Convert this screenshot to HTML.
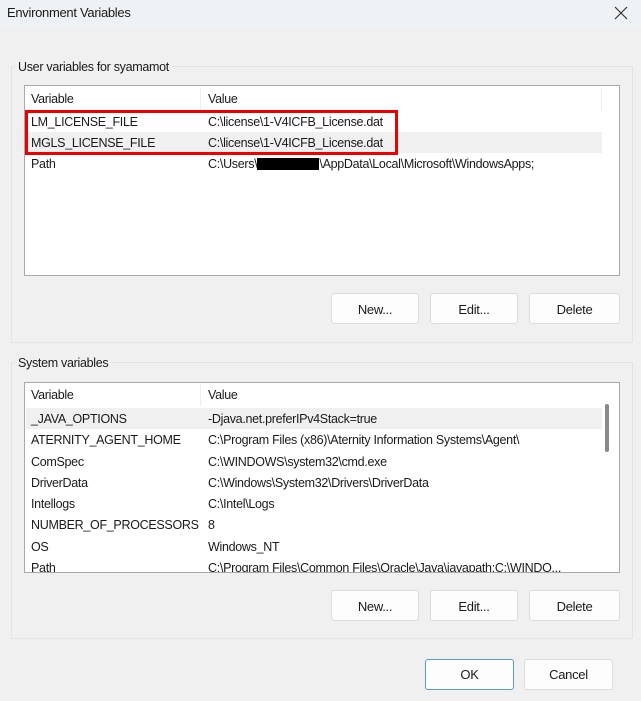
<!DOCTYPE html>
<html><head><style>
*{margin:0;padding:0;box-sizing:border-box}
body{width:641px;height:701px;background:#f0f0f0;font-family:"Liberation Sans",sans-serif;font-size:12.5px;color:#1a1a1a;position:relative;overflow:hidden;letter-spacing:-0.3px}
.abs{position:absolute}
.title{left:0;top:0;width:641px;height:28px;background:#eef2f5}
.grp{border:1px solid #e3e3e3}
.lbl{background:#f0f0f0;padding:0 3px;white-space:nowrap}
.list{background:#fff;border:1px solid #a9a9a9}
.row{position:absolute;left:1px;height:21px;line-height:23px;white-space:nowrap}
.row span{position:absolute;left:5px}
.row span.v{left:182px}
.btn{background:#fdfdfd;border:1px solid #dcdcdc;border-radius:3px;text-align:center;line-height:31px;font-size:13px}
</style></head><body>
<div class="abs title"></div>
<div class="abs" style="left:7px;top:5px;font-size:13px">Environment Variables</div>
<svg class="abs" style="left:614px;top:6px" width="14" height="14"><path d="M1 1L13 13M13 1L1 13" stroke="#333" stroke-width="1.2"/></svg>

<div class="abs grp" style="left:11px;top:66px;width:622px;height:277px"></div>
<div class="abs lbl" style="left:15px;top:60px">User variables for syamamot</div>
<div class="abs list" style="left:24px;top:85px;width:596px;height:191px">
 <div class="row" style="top:2px;width:576px;height:22px;border-right:1px solid #eee"><span>Variable</span><span class="v">Value</span></div>
 <div class="abs" style="left:175px;top:2px;width:1px;height:22px;background:#eee"></div>
 <div class="row" style="top:25px;width:576px"><span>LM_LICENSE_FILE</span><span class="v">C:\license\1-V4ICFB_License.dat</span></div>
 <div class="row" style="top:46px;width:576px;background:#f0f0f0"><span>MGLS_LICENSE_FILE</span><span class="v">C:\license\1-V4ICFB_License.dat</span></div>
 <div class="row" style="top:67px;width:576px"><span>Path</span><span class="v">C:\Users\<b style="display:inline-block;width:62px;height:12px;background:#000;vertical-align:-2px"></b>\AppData\Local\Microsoft\WindowsApps;</span></div>
</div>
<div class="abs" style="left:25px;top:110px;width:373px;height:45px;border:3px solid #ee0000"></div>
<div class="abs btn" style="left:331px;top:293px;width:88px;height:31px">New...</div>
<div class="abs btn" style="left:430px;top:293px;width:88px;height:31px">Edit...</div>
<div class="abs btn" style="left:529px;top:293px;width:91px;height:31px">Delete</div>

<div class="abs grp" style="left:11px;top:362px;width:622px;height:277px"></div>
<div class="abs lbl" style="left:15px;top:356px">System variables</div>
<div class="abs list" style="left:24px;top:382px;width:596px;height:191px;overflow:hidden">
 <div class="row" style="top:1px;width:576px;height:22px"><span>Variable</span><span class="v">Value</span></div>
 <div class="abs" style="left:175px;top:1px;width:1px;height:22px;background:#eee"></div>
 <div class="row" style="top:25px;width:576px;background:#f0f0f0"><span>_JAVA_OPTIONS</span><span class="v">-Djava.net.preferIPv4Stack=true</span></div>
 <div class="row" style="top:46px"><span>ATERNITY_AGENT_HOME</span><span class="v">C:\Program Files (x86)\Aternity Information Systems\Agent\</span></div>
 <div class="row" style="top:68px"><span>ComSpec</span><span class="v">C:\WINDOWS\system32\cmd.exe</span></div>
 <div class="row" style="top:89px"><span>DriverData</span><span class="v">C:\Windows\System32\Drivers\DriverData</span></div>
 <div class="row" style="top:110px"><span>Intellogs</span><span class="v">C:\Intel\Logs</span></div>
 <div class="row" style="top:131px"><span>NUMBER_OF_PROCESSORS</span><span class="v">8</span></div>
 <div class="row" style="top:153px"><span>OS</span><span class="v">Windows_NT</span></div>
 <div class="row" style="top:174px"><span>Path</span><span class="v">C:\Program Files\Common Files\Oracle\Java\javapath;C:\WINDO...</span></div>
 <div class="abs" style="left:580px;top:21px;width:4px;height:48px;background:#8a8a8a;border-radius:2px"></div>
</div>
<div class="abs btn" style="left:331px;top:590px;width:88px;height:31px">New...</div>
<div class="abs btn" style="left:430px;top:590px;width:88px;height:31px">Edit...</div>
<div class="abs btn" style="left:529px;top:590px;width:91px;height:31px">Delete</div>

<div class="abs btn" style="left:425px;top:659px;width:89px;height:31px;border:1px solid #5b9bd5;line-height:29px">OK</div>
<div class="abs btn" style="left:524px;top:659px;width:89px;height:31px;line-height:29px">Cancel</div>
</body></html>
